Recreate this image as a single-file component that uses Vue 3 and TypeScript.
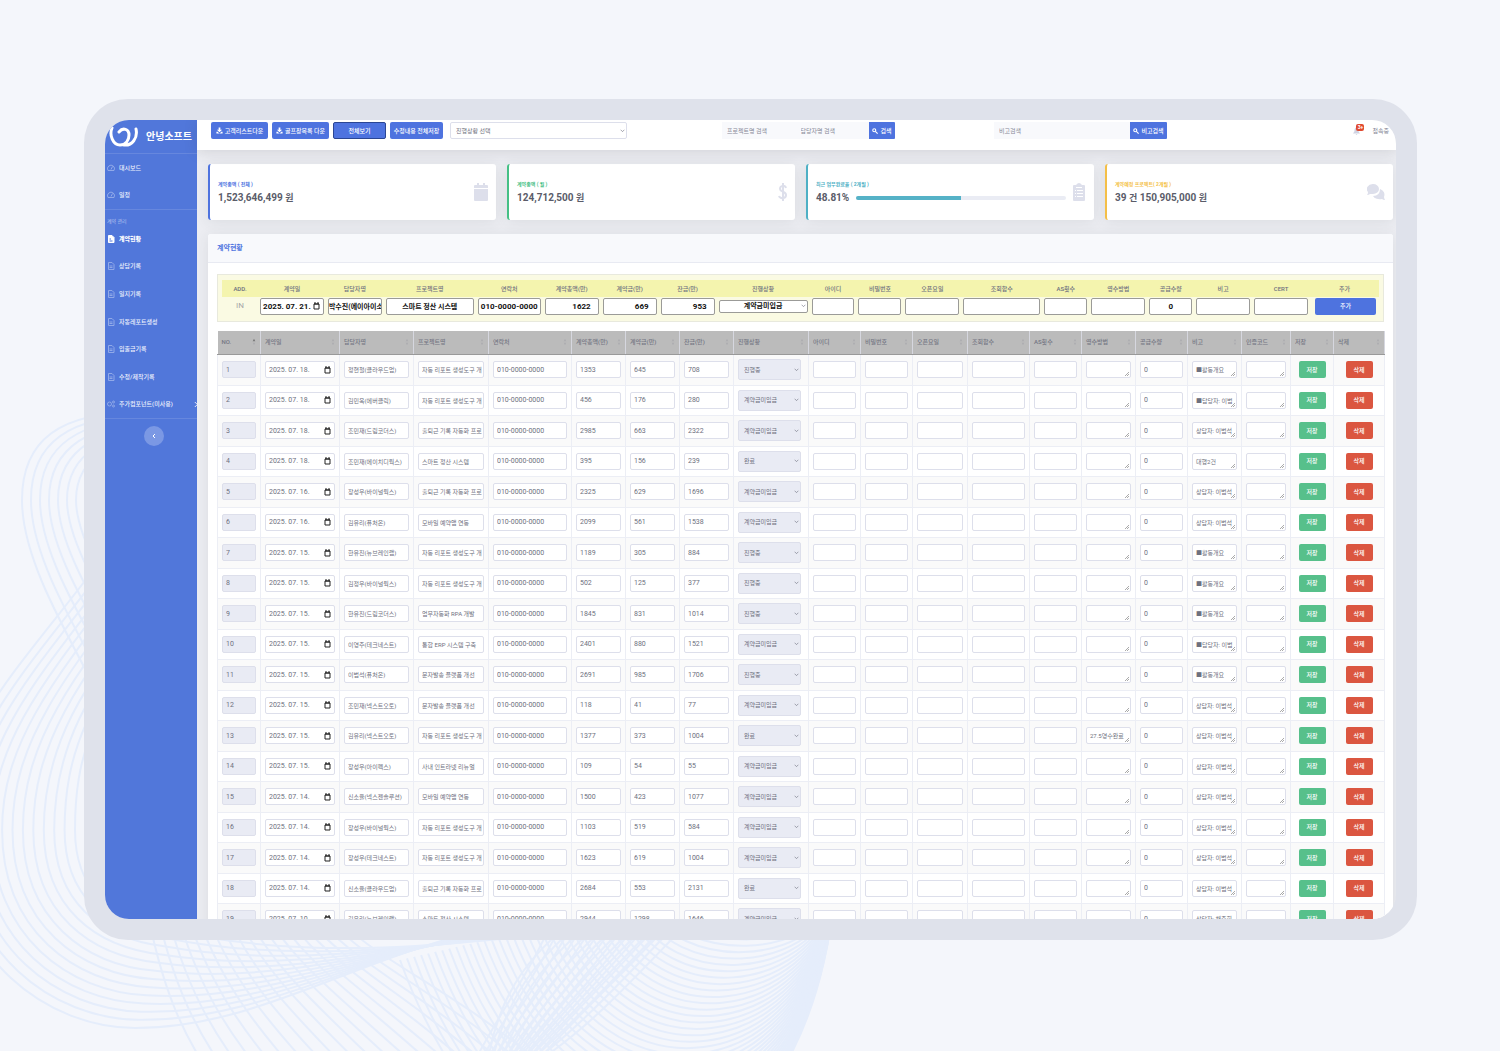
<script setup lang="ts">
type Row = { date: string; owner: string; project: string; total: number; deposit: number; balance: number; status: string; note: string; receipt?: string }

const statuses = ['진행중', '계약금미입금', '완료']
const menu = ['상담기록', '일지기록', '자동레포트생성', '입출금기록', '수정/제작기록']

const source: [string, string, string, number, number, number, number, string, string?][] = [
  ['2025. 07. 18.', '정현철(클라우드업)', '자동 리포트 생성도구 개', 1353, 645, 708, 0, '■활동개요'],
  ['2025. 07. 18.', '김민욱(에버클릭)', '자동 리포트 생성도구 개', 456, 176, 280, 1, '■담당자: 이범'],
  ['2025. 07. 18.', '조민재(드림코더스)', '출퇴근 기록 자동화 프로', 2985, 663, 2322, 1, '상담자: 이범석'],
  ['2025. 07. 18.', '조민재(에이치디웍스)', '스마트 정산 시스템', 395, 156, 239, 2, '대행2건'],
  ['2025. 07. 16.', '장성우(바이널웍스)', '출퇴근 기록 자동화 프로', 2325, 629, 1696, 1, '상담자: 이범석'],
  ['2025. 07. 16.', '김유리(퓨처온)', '모바일 예약앱 연동', 2099, 561, 1538, 1, '상담자: 이범석'],
  ['2025. 07. 15.', '한유진(뉴브레인랩)', '자동 리포트 생성도구 개', 1189, 305, 884, 0, '■활동개요'],
  ['2025. 07. 15.', '김정우(바이널웍스)', '자동 리포트 생성도구 개', 502, 125, 377, 0, '■활동개요'],
  ['2025. 07. 15.', '한유진(드림코더스)', '업무자동화 RPA 개발', 1845, 831, 1014, 0, '■활동개요'],
  ['2025. 07. 15.', '이영주(테크네스트)', '통합 ERP 시스템 구축', 2401, 880, 1521, 1, '■담당자: 이범'],
  ['2025. 07. 15.', '이범석(퓨처온)', '문자발송 플랫폼 개선', 2691, 985, 1706, 0, '■활동개요'],
  ['2025. 07. 15.', '조민재(넥스트오토)', '문자발송 플랫폼 개선', 118, 41, 77, 1, '상담자: 이범석'],
  ['2025. 07. 15.', '김유리(넥스트오토)', '자동 리포트 생성도구 개', 1377, 373, 1004, 2, '상담자: 이범석', '27.5영수완료'],
  ['2025. 07. 15.', '장성우(아이펙스)', '사내 인트라넷 리뉴얼', 109, 54, 55, 1, '상담자: 이범석'],
  ['2025. 07. 14.', '신소율(넥스젠솔루션)', '모바일 예약앱 연동', 1500, 423, 1077, 1, '상담자: 이범석'],
  ['2025. 07. 14.', '장성우(바이널웍스)', '자동 리포트 생성도구 개', 1103, 519, 584, 1, '상담자: 이범석'],
  ['2025. 07. 14.', '장성우(테크네스트)', '자동 리포트 생성도구 개', 1623, 619, 1004, 1, '상담자: 이범석'],
  ['2025. 07. 14.', '신소율(클라우드업)', '출퇴근 기록 자동화 프로', 2684, 553, 2131, 2, '상담자: 이범석'],
  ['2025. 07. 10.', '김유리(뉴브레인랩)', '스마트 정산 시스템', 2944, 1298, 1646, 1, '상담자: 채주희'],
]
const rows: Row[] = source.map(([date, owner, project, total, deposit, balance, s, note, receipt]) => ({
  date, owner, project, total, deposit, balance, status: statuses[s], note, receipt,
}))

const columns = [
  { name: 'NO.', w: 43 }, { name: '계약일', w: 79 }, { name: '담당자명', w: 74 }, { name: '프로젝트명', w: 75 },
  { name: '연락처', w: 83 }, { name: '계약총액(만)', w: 54 }, { name: '계약금(만)', w: 54 }, { name: '잔금(만)', w: 54 },
  { name: '진행상황', w: 75 }, { name: '아이디', w: 52 }, { name: '비밀번호', w: 52 }, { name: '오픈요일', w: 55 },
  { name: '조회함수', w: 62 }, { name: 'AS횟수', w: 52 }, { name: '영수방법', w: 54 }, { name: '공급수량', w: 52 },
  { name: '비고', w: 54 }, { name: '인증코드', w: 49 }, { name: '저장', w: 43 }, { name: '삭제', w: 51 },
]

const addFields = [
  { name: 'ADD.', w: 36, kind: 'in', value: 'IN' },
  { name: '계약일', w: 68, kind: 'date', value: '2025. 07. 21.' },
  { name: '담당자명', w: 58, kind: 'text', value: '박수진(에이아이소프트)' },
  { name: '프로젝트명', w: 92, kind: 'text', value: '스마트 정산 시스템' },
  { name: '연락처', w: 67, kind: 'phone', value: '010-0000-0000' },
  { name: '계약총액(만)', w: 58, kind: 'sum', value: '1622' },
  { name: '계약금(만)', w: 58, kind: 'sum', value: '669' },
  { name: '잔금(만)', w: 58, kind: 'sum', value: '953' },
  { name: '진행상황', w: 93, kind: 'select', value: '계약금미입금' },
  { name: '아이디', w: 47, kind: 'text', value: '' },
  { name: '비밀번호', w: 47, kind: 'text', value: '' },
  { name: '오픈요일', w: 58, kind: 'text', value: '' },
  { name: '조회함수', w: 81, kind: 'text', value: '' },
  { name: 'AS횟수', w: 47, kind: 'text', value: '' },
  { name: '영수방법', w: 58, kind: 'text', value: '' },
  { name: '공급수량', w: 47, kind: 'phone', value: '0' },
  { name: '비고', w: 58, kind: 'text', value: '' },
  { name: 'CERT', w: 58, kind: 'text', value: '' },
  { name: '추가', w: 69, kind: 'button', value: '추가' },
]

// Each wave is a family of cubic curves blended between two boundary curves.
function blend(a: number[], b: number[], n: number): string[] {
  return Array.from({ length: n }, (_, i) => {
    const t = i / (n - 1)
    const p = a.map((v, k) => Math.round((v + (b[k] - v) * t) * 10) / 10)
    return `M${p[0]} ${p[1]}C${p.slice(2).join(' ')}`
  })
}
const waves = [
  ...blend([140, 412, 60, 412, 22, 440, 22, 500, 22, 580, 100, 680, 150, 800], [200, 430, 110, 430, 76, 460, 76, 500, 76, 560, 160, 660, 220, 780], 7),
  ...blend([130, 520, 40, 650, -50, 720, -50, 830, -50, 960, 50, 1028, 135, 1028, 300, 1028, 420, 900, 640, 920], [180, 600, 90, 700, 75, 760, 75, 830, 75, 890, 110, 920, 170, 930, 300, 960, 450, 950, 640, 920], 13),
  ...blend([145, 900, 160, 980, 180, 1040, 230, 1100], [330, 910, 370, 960, 460, 990, 560, 1080], 20),
  ...blend([488, 1060, 500, 990, 530, 950, 600, 900], [540, 1060, 600, 1020, 650, 960, 710, 900], 13),
  ...blend([660, 900, 690, 955, 810, 950, 834, 900], [400, 960, 520, 1290, 800, 1220, 834, 900], 38),
  ...blend([560, 900, 540, 960, 500, 1010, 470, 1070], [690, 900, 640, 960, 580, 1010, 530, 1070], 12),
]
</script>

<template>
  <div class="page">
    <svg class="waves" viewBox="0 0 1500 1051" preserveAspectRatio="xMinYMin slice" aria-hidden="true">
      <path v-for="(d, i) in waves" :key="i" :d="d" />
    </svg>
    <div class="device">
      <div class="screen">
        <aside class="sidebar">
          <a class="brand" href="#">
            <svg class="logo" viewBox="0 0 30 22" aria-hidden="true">
              <path d="M3 2C0 9 4 19 11 19C17 19 20 14 20 9C20 3 14 1 10 6M15 19C23 20 29 12 27 3" />
            </svg>
            <span>안녕소프트</span>
          </a>
          <nav>
            <div class="group top">
              <a v-for="t in ['대시보드', '일정']" :key="t" href="#">
                <svg viewBox="0 0 16 16" class="ico"><path d="M2 13A7 7 0 1 1 14 13ZM8 11L11 5" /></svg>{{ t }}
              </a>
            </div>
            <p class="section">계약 관리</p>
            <div class="group">
              <a href="#" class="active">
                <svg viewBox="0 0 16 16" class="ico full"><path d="M3 1H10L14 5V15H3Z" /><path class="cut" d="M5 8H8M5 12H11" /></svg>계약현황
              </a>
              <a v-for="t in menu" :key="t" href="#">
                <svg viewBox="0 0 16 16" class="ico"><path d="M3 1H10L14 5V15H3ZM5 8H11M5 11H11" /></svg>{{ t }}
              </a>
              <a href="#">
                <svg viewBox="0 0 16 16" class="ico"><circle cx="5" cy="8" r="4" /><circle cx="13" cy="4" r="2" /><circle cx="13" cy="12" r="2" /></svg>추가컴포넌트(미사용)
                <svg viewBox="0 0 6 8" class="more"><path d="M1 1L4 4L1 7" /></svg>
              </a>
            </div>
          </nav>
          <button class="collapse" type="button" aria-label="메뉴 접기">
            <svg viewBox="0 0 8 8"><path d="M5 2L3 4L5 6" /></svg>
          </button>
        </aside>

        <div class="content">
          <header class="topbar">
            <div class="actions">
              <button type="button" class="btn"><svg viewBox="0 0 16 16"><path d="M6 1h4v5h4l-6 6-6-6h4zM1 11h3l3 3h2l3-3h3v4H1z" /></svg>고객리스트다운</button>
              <button type="button" class="btn"><svg viewBox="0 0 16 16"><path d="M6 1h4v5h4l-6 6-6-6h4zM1 11h3l3 3h2l3-3h3v4H1z" /></svg>골프장목록 다운</button>
              <button type="button" class="btn pressed">전체보기</button>
              <button type="button" class="btn">수정내용 전체저장</button>
            </div>
            <div class="picker">
              <select aria-label="진행상황 선택"><option>진행상황 선택</option></select>
              <svg viewBox="0 0 8 6" class="chev"><path d="M1 1L4 4L7 1" /></svg>
            </div>
            <form class="search two" @submit.prevent>
              <input placeholder="프로젝트명 검색" aria-label="프로젝트명 검색" />
              <input placeholder="담당자명 검색" aria-label="담당자명 검색" />
              <button class="btn square"><svg viewBox="0 0 16 16" class="lens"><circle cx="6" cy="6" r="4" /><path d="M9 9L15 15" /></svg>검색</button>
            </form>
            <form class="search one" @submit.prevent>
              <input placeholder="비고검색" aria-label="비고검색" />
              <button class="btn square"><svg viewBox="0 0 16 16" class="lens"><circle cx="6" cy="6" r="4" /><path d="M9 9L15 15" /></svg>비고검색</button>
            </form>
            <div class="user">
              <a class="bell" href="#" aria-label="알림">
                <svg viewBox="0 0 14 16"><path d="M7 0C4 2 3 4 3 7C3 10 1 11 0 13H14C13 11 11 10 11 7C11 4 10 2 7 0ZM5 14H9L7 16Z" /></svg>
                <span class="badge">3+</span>
              </a>
              <a href="#">접속중</a>
            </div>
          </header>

          <main>
            <section class="cards">
              <article class="card blue">
                <div class="info"><h3>계약총액 ( 전체 )</h3><p>1,523,646,499 <small>원</small></p></div>
                <svg viewBox="0 0 14 18"><path d="M1 2H3V0H5V2H9V0H11V2H13Q14 2 14 3V5H0V3Q0 2 1 2ZM0 6H14V17Q14 18 13 18H1Q0 18 0 17Z" /></svg>
              </article>
              <article class="card green">
                <div class="info"><h3>계약총액 ( 월 )</h3><p>124,712,500 <small>원</small></p></div>
                <svg viewBox="0 0 14 18" class="line"><path d="M7 0V18M10 5C9 2 4 2 4 6C4 9 10 8 10 12C10 16 4 16 3 13" /></svg>
              </article>
              <article class="card cyan">
                <div class="info">
                  <h3>최근 업무완료율 ( 2개월 )</h3>
                  <div class="rate"><p>48.81%</p><div class="bar"><i></i></div></div>
                </div>
                <svg viewBox="0 0 14 18"><path fill-rule="evenodd" d="M2 2H4Q7-2 10 2H12Q13 2 13 3V17Q13 18 12 18H2Q1 18 1 17V3Q1 2 2 2ZM3 7H4V8H3ZM5 7H11V8H5ZM3 10H4V11H3ZM5 10H11V11H5ZM3 13H4V14H3ZM5 13H11V14H5ZM4 4H10V5H4Z" /></svg>
              </article>
              <article class="card yellow">
                <div class="info"><h3>계약예정 프로젝트( 2개월 )</h3><p>39 <small>건</small> 150,905,000 <small>원</small></p></div>
                <svg viewBox="0 0 18 18" class="wide"><path d="M6 1A6 5 0 0 1 6 11Q4 11 3 11Q2 12 0 12Q1 11 1 9A6 5 0 0 1 6 1Z" /><path d="M13 6A6 6 0 0 1 17 14Q17 15 18 17Q16 17 15 16A7 5 0 0 1 6 13Q13 13 13 6Z" /></svg>
              </article>
            </section>

            <section class="panel">
              <h2>계약현황</h2>
              <div class="body">
                <form class="adder" @submit.prevent>
                  <label v-for="f in addFields" :key="f.name" class="field" :class="f.kind" :style="{ flexGrow: f.w }">
                    <span class="cap">{{ f.name }}</span>
                    <span class="slot">
                      <span v-if="f.kind === 'in'" class="tag">IN</span>
                      <template v-else-if="f.kind === 'select'">
                        <select><option>{{ f.value }}</option></select>
                        <svg viewBox="0 0 8 6" class="chev"><path d="M1 1L4 4L7 1" /></svg>
                      </template>
                      <button v-else-if="f.kind === 'button'" class="btn">추가</button>
                      <template v-else>
                        <input :value="f.value" />
                        <svg v-if="f.kind === 'date'" viewBox="0 0 7 8" class="cal"><path d="M1 2H6V7H1ZM2 0V2M5 0V2M1 2H6" /></svg>
                      </template>
                    </span>
                  </label>
                </form>

                <table>
                  <colgroup><col v-for="c in columns" :key="c.name" :style="{ width: c.w + 'px' }" /></colgroup>
                  <thead>
                    <tr>
                      <th v-for="(c, i) in columns" :key="c.name" scope="col">
                        <div class="head">{{ c.name }}<svg viewBox="0 0 6 10" :class="{ on: i === 0 }"><path d="M3 0L5 4H1Z" /><path d="M3 10L5 6H1Z" /></svg></div>
                      </th>
                    </tr>
                  </thead>
                  <tbody>
                    <tr v-for="(r, i) in rows" :key="i">
                      <td><input class="num" :value="i + 1" disabled aria-label="NO." /></td>
                      <td><div class="pick"><input class="num" :value="r.date" aria-label="계약일" /><svg viewBox="0 0 7 8" class="cal"><path d="M1 2H6V7H1ZM2 0V2M5 0V2M1 2H6" /></svg></div></td>
                      <td><input :value="r.owner" aria-label="담당자명" /></td>
                      <td><input :value="r.project" aria-label="프로젝트명" /></td>
                      <td><input class="num" value="010-0000-0000" aria-label="연락처" /></td>
                      <td><input class="num" :value="r.total" aria-label="계약총액" /></td>
                      <td><input class="num" :value="r.deposit" aria-label="계약금" /></td>
                      <td><input class="num" :value="r.balance" aria-label="잔금" /></td>
                      <td class="state">
                        <div class="pick">
                          <select aria-label="진행상황" :value="r.status"><option v-for="s in statuses" :key="s">{{ s }}</option></select>
                          <svg viewBox="0 0 8 6" class="chev"><path d="M1 1L4 4L7 1" /></svg>
                        </div>
                      </td>
                      <td><input aria-label="아이디" /></td>
                      <td><input aria-label="비밀번호" /></td>
                      <td><input aria-label="오픈요일" /></td>
                      <td><input aria-label="조회함수" /></td>
                      <td><input aria-label="AS횟수" /></td>
                      <td><textarea rows="1" aria-label="영수방법" :value="r.receipt"></textarea></td>
                      <td><input class="num" value="0" aria-label="공급수량" /></td>
                      <td><textarea rows="1" aria-label="비고" :value="r.note"></textarea></td>
                      <td><textarea rows="1" aria-label="인증코드"></textarea></td>
                      <td class="act"><button type="button" class="btn save">저장</button></td>
                      <td class="act"><button type="button" class="btn del">삭제</button></td>
                    </tr>
                  </tbody>
                </table>
              </div>
            </section>
          </main>
        </div>
      </div>
    </div>
  </div>
</template>

<style>
body { margin: 0; background: #f4f6fb; }
</style>

<style scoped>
* { box-sizing: border-box; }
.page {
  position: relative; display: flex; height: 100vh; padding: 99px 83px 111px 84px; overflow: hidden;
  background: #f4f6fb; color: #6e707e;
  font: 6px/12px Roboto, "Noto Sans CJK KR", sans-serif;
}
input, select, textarea, button { font: inherit; color: inherit; min-width: 0; margin: 0; outline: 0; }
a { color: inherit; text-decoration: none; }
h2, h3, p { margin: 0; }
.waves { position: absolute; inset: 0; width: 100%; height: 100%; }
.waves path { fill: none; stroke: #e5edfb; stroke-width: 2; }
.device { position: relative; flex: 1; min-width: 0; display: flex; padding: 21px; border-radius: 44px; background: #dfe2eb; }
.screen { flex: 1; min-width: 0; display: flex; overflow: hidden; border-radius: 24px; background: #ecedf2; }

.sidebar { flex: none; width: 92px; background: #5177da; color: #edf1fc; }
.brand { display: flex; align-items: center; gap: 7px; height: 34px; padding: 0 4px; border-bottom: 1px solid #6687de; color: #fff; font-size: 10px; font-weight: 700; line-height: 16px; white-space: nowrap; }
.logo { flex: none; width: 30px; height: 22px; fill: none; stroke: #fff; stroke-width: 3; stroke-linecap: round; }
nav { border-bottom: 1px solid #6687de; }
.group { display: flex; flex-direction: column; height: 193px; }
.group.top { height: 55px; }
nav a { position: relative; flex: 1; display: flex; align-items: center; gap: 4px; padding-left: 2px; white-space: nowrap; font-weight: 500; }
nav a.active { color: #fff; font-weight: 900; }
.ico { width: 8px; height: 8px; fill: none; stroke: #90a9e8; stroke-width: 2; }
.ico.full { fill: #fff; stroke: #fff; }
.ico .cut { stroke: #5177da; }
.section { height: 16px; padding: 5px 0 0 2px; border-top: 1px solid #6687de; font-size: 5px; color: #b9c8f0; }
.more { position: absolute; right: -2px; width: 5px; height: 7px; fill: none; stroke: #fff; }
.collapse { display: block; width: 20px; height: 20px; margin: 7px 0 0 39px; padding: 6px; border: 0; border-radius: 50%; background: #7b98e4; }
.collapse svg { display: block; width: 8px; height: 8px; fill: none; stroke: #fff; stroke-width: 1; }

.content { flex: 1; min-width: 0; }
.topbar { position: relative; display: flex; align-items: center; height: 30px; padding: 0 7px 9px 14px; background: #fff; box-shadow: 0 2px 14px #3a3b4526; }
.btn { display: inline-flex; align-items: center; justify-content: center; gap: 2px; height: 17px; padding: 0; border: 0; border-radius: 2px; background: #4e73df; color: #fff; font-weight: 500; white-space: nowrap; }
.btn svg { width: 7px; height: 7px; fill: #fff; }
.btn .lens { width: 6px; height: 6px; fill: none; stroke: #fff; stroke-width: 3; }
.actions { display: flex; gap: 4px; flex: none; }
.actions .btn { width: 57px; }
.actions .pressed { width: 53px; border: 1px solid #2b4694; }
.actions .btn:last-child { width: 53px; }
.picker { position: relative; flex: 0 1 177px; margin-left: 7px; }
.picker select { display: block; width: 100%; height: 17px; padding: 0 5px; border: 1px solid #dddfeb; border-radius: 2px; background: #fff; appearance: none; }
.chev { position: absolute; right: 2px; top: 50%; width: 5px; height: 4px; margin-top: -2px; fill: none; stroke: #6e707e; pointer-events: none; }
.search { display: flex; min-width: 0; }
.search input { flex: 1 1 0; width: 0; height: 17px; padding: 0 5px; border: 0; background: #f8f9fc; }
.search input::placeholder { color: #858796; opacity: 1; }
.search.two { flex: 0 1 173px; margin-left: 95px; }
.search.one { flex: 0 1 173px; margin-left: 99px; }
.square { flex: none; width: 26px; border-radius: 0 1px 1px 0; }
.one .square { width: 37px; }
.user { display: flex; align-items: center; gap: 12px; margin-left: auto; color: #858796; }
.bell { position: relative; width: 7px; height: 8px; }
.bell svg { display: block; width: 7px; height: 8px; fill: #d1d3e2; }
.badge { position: absolute; left: 3px; top: -3px; width: 8px; height: 7px; border-radius: 2px; background: #e0492f; color: #fff; font-size: 5px; font-weight: 700; line-height: 7px; text-align: center; }

main { padding: 14px 3px 0 11px; }
.cards { display: grid; grid-template-columns: repeat(4, 1fr); gap: 11px; }
.card { display: flex; align-items: center; height: 56px; padding: 0 8px; border-left: 2px solid; border-radius: 3px; background: #fff; box-shadow: 0 2px 14px #3a3b4518; }
.blue { color: #4e73df; } .green { color: #45c085; } .cyan { color: #4eb0c5; } .yellow { color: #f4bf47; }
.info { flex: 1; padding-top: 1px; }
.info h3 { font-size: 5px; line-height: 10px; font-weight: 700; }
.info p { color: #5a5c69; font-size: 10px; line-height: 18px; font-weight: 700; white-space: nowrap; }
.info small { font-size: 9px; }
.rate { display: flex; align-items: center; gap: 7px; padding-right: 6px; }
.bar { flex: 1; height: 4px; border-radius: 2px; background: #eaecf4; overflow: hidden; }
.bar i { display: block; width: 50%; height: 100%; background: #55b2c7; }
.card > svg { width: 14px; height: 18px; fill: #dddfeb; }
.card > .wide { width: 18px; }
.card > .line { fill: none; stroke: #dddfeb; stroke-width: 2; margin-right: -3px; }

.panel { margin-top: 14px; border-radius: 3px; background: #fff; box-shadow: 0 2px 14px #3a3b4518; }
.panel h2 { height: 29px; padding-left: 9px; border-bottom: 1px solid #e8eaf2; border-radius: 3px 3px 0 0; background: #f8f9fc; color: #4e73df; font-size: 7px; line-height: 29px; font-weight: 700; }
.body { padding: 11px 9px; }
.adder { display: flex; height: 48px; padding: 5px 4px; border: 1px solid #e8e9dd; background: #fafae3; }
.field { flex: 1 1 0; min-width: 0; }
.cap { display: block; height: 17px; background: #f4f4ae; text-align: center; line-height: 17px; font-weight: 500; white-space: nowrap; }
.slot { position: relative; display: flex; align-items: center; height: 18px; margin: 0 2px; }
.slot input, .slot select { width: 100%; height: 17px; padding: 0; border: 1px solid #9b9b98; border-radius: 2px; background: #fff; color: #111; font-size: 7px; font-weight: 700; text-align: center; text-align-last: center; }
.slot select { height: 13px; appearance: none; line-height: 10px; }
.sum .slot input { font-size: 8px; padding-right: 7px; text-align: right; text-align-last: right; }
.phone .slot input { font-size: 8px; }
.date .slot input { font-size: 8px; padding-right: 10px; }
.tag { width: 100%; text-align: center; font-size: 8px; color: #a5a6a8; }
.button .slot { margin: 0 3px 0 5px; }
.slot .btn { width: 100%; }
.cal { position: absolute; right: 4px; top: 50%; width: 7px; height: 8px; margin-top: -4px; fill: none; stroke: #222; pointer-events: none; }

table { width: 100%; margin-top: 9px; border-collapse: collapse; table-layout: fixed; }
th { height: 23px; padding: 0 4px; border-right: 1px solid #d6d7df; border-bottom: 1px solid #999; background: #bbb; color: #747683; text-align: left; font-weight: 500; white-space: nowrap; }
.head { display: flex; justify-content: space-between; align-items: center; }
.head svg { width: 4px; height: 8px; fill: #adadb0; }
.head .on path:first-child { fill: #777; }
td { height: 30px; padding: 0 4px; border: 1px solid #eceef5; }
tr:nth-child(odd) td { height: 31px; background: #fafafa; }
td input, td textarea, td select { display: block; width: 100%; height: 17px; padding: 0 0 0 3px; border: 1px solid #dddfeb; border-radius: 2px; background: #fff; }
td input:disabled { background: #e9ebf4; }
td input.num { font-size: 7px; }
td textarea {
  padding: 2px 0 0 3px; overflow: hidden; resize: none; white-space: nowrap;
  background: #fff url("data:image/svg+xml,%3Csvg xmlns='http://www.w3.org/2000/svg' width='5' height='5'%3E%3Cpath d='M0 4L4 0M2 4L4 2' stroke='%23aaa'/%3E%3C/svg%3E") no-repeat right bottom;
}
.pick { position: relative; }
td.state { padding-right: 7px; }
td select { height: 21px; padding: 0 5px; background: #e9ebf4; appearance: none; }
td.act { text-align: center; }
.save, .del { width: 27px; vertical-align: middle; }
.save { background: #57c08b; }
.del { background: #db5640; }
</style>
